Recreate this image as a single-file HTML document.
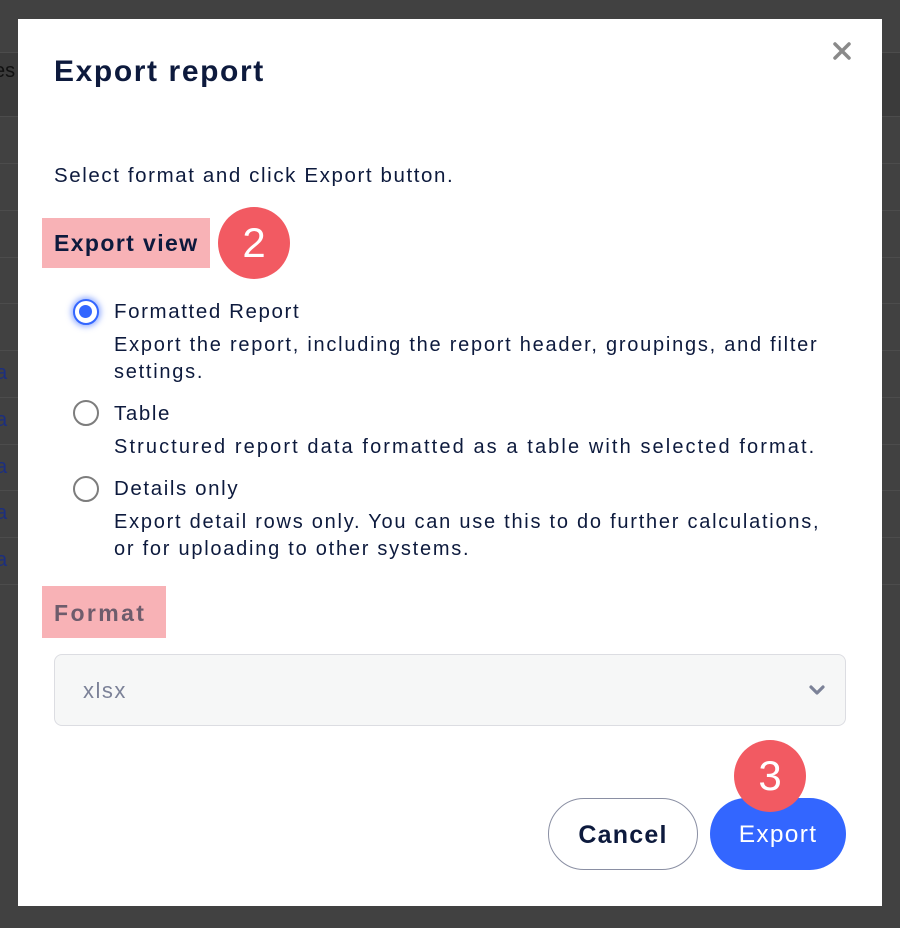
<!DOCTYPE html>
<html><head><style>
*{margin:0;padding:0;box-sizing:border-box}
body{width:900px;height:928px;background:#414141;position:relative;overflow:hidden;font-family:"Liberation Sans",sans-serif;color:#0d1a3d}
.a{position:absolute}
.line{position:absolute;left:0;width:900px;height:1px;background:#4c4c4c}
.modal{position:absolute;left:18px;top:19px;width:864px;height:887px;background:#fff}
.t{position:absolute;white-space:nowrap}
.badge{position:absolute;width:72px;height:72px;border-radius:50%;background:#f25a62;color:#fff;font-size:42px;text-align:center;line-height:72px}
.radio{position:absolute;width:26px;height:26px;border-radius:50%;border:2.5px solid #7d7d7d;background:#fff}
.desc{font-size:20px;line-height:27px;color:#0d1a3d;letter-spacing:1.75px}
.lbl{font-size:20.5px;color:#0d1a3d;letter-spacing:1.6px}
</style></head><body>
<div class="a" style="left:0;top:52px;width:900px;height:64px;background:#3b3b3b"></div>
<div class="line" style="top:52px"></div>
<div class="line" style="top:116px"></div>
<div class="line" style="top:163px"></div>
<div class="line" style="top:210px"></div>
<div class="line" style="top:257px"></div>
<div class="line" style="top:303px"></div>
<div class="line" style="top:350px"></div>
<div class="line" style="top:397px"></div>
<div class="line" style="top:444px"></div>
<div class="line" style="top:490px"></div>
<div class="line" style="top:537px"></div>
<div class="line" style="top:584px"></div>
<div class="a" style="left:866px;top:52px;width:1px;height:540px;background:#4c4c4c"></div>
<div class="t" style="left:-6px;top:60px;font-size:20px;color:#111">es</div>
<div class="t" style="left:-4px;top:362px;font-size:20px;color:#1c2f80">a</div>
<div class="t" style="left:-4px;top:409px;font-size:20px;color:#1c2f80">a</div>
<div class="t" style="left:-4px;top:456px;font-size:20px;color:#1c2f80">a</div>
<div class="t" style="left:-4px;top:502px;font-size:20px;color:#1c2f80">a</div>
<div class="t" style="left:-4px;top:549px;font-size:20px;color:#1c2f80">a</div>

<div class="modal"></div>
<div class="t" style="left:54px;top:55px;font-size:30px;font-weight:bold;color:#0d1a3d;letter-spacing:1.6px">Export report</div>
<svg class="a" style="left:833px;top:42px" width="18" height="18" viewBox="0 0 18 18"><path d="M2 2L16 16M16 2L2 16" stroke="#8a8a8a" stroke-width="3.5" stroke-linecap="round"/></svg>
<div class="t desc" style="left:54px;top:162px;font-size:20.5px;letter-spacing:1.6px">Select format and click Export button.</div>

<div class="a" style="left:42px;top:218px;width:168px;height:50px;background:#f8b2b6"></div>
<div class="t" style="left:54px;top:230px;font-size:23px;font-weight:bold;letter-spacing:1.4px">Export view</div>
<div class="badge" style="left:218px;top:207px">2</div>

<div class="radio" style="left:73px;top:299px;border:2.5px solid #3366ff;box-shadow:0 0 6px 2px rgba(51,102,255,.5)"><div class="a" style="left:4px;top:4px;width:13px;height:13px;border-radius:50%;background:#3366ff"></div></div>
<div class="t lbl" style="left:114px;top:300px">Formatted Report</div>
<div class="t desc" style="left:114px;top:332px">Export the report, including the report header, groupings, and filter<br>settings.</div>

<div class="radio" style="left:73px;top:400px"></div>
<div class="t lbl" style="left:114px;top:402px">Table</div>
<div class="t desc" style="left:114px;top:434px;letter-spacing:2.1px">Structured report data formatted as a table with selected format.</div>

<div class="radio" style="left:73px;top:476px"></div>
<div class="t lbl" style="left:114px;top:477px">Details only</div>
<div class="t desc" style="left:114px;top:509px">Export detail rows only. You can use this to do further calculations,<br>or for uploading to other systems.</div>

<div class="a" style="left:42px;top:586px;width:124px;height:52px;background:#f8b2b6"></div>
<div class="t" style="left:54px;top:600px;font-size:23px;font-weight:bold;color:#6e5c6c;letter-spacing:2.4px">Format</div>

<div class="a" style="left:54px;top:654px;width:792px;height:72px;background:#f6f7f7;border:1px solid #dcdde2;border-radius:8px"></div>
<div class="t" style="left:83px;top:678px;font-size:22px;color:#7c8298;letter-spacing:1.5px">xlsx</div>
<svg class="a" style="left:809px;top:685px" width="16" height="11" viewBox="0 0 16 11"><path d="M2 2L8 8L14 2" stroke="#7c8298" stroke-width="3.2" fill="none" stroke-linecap="round" stroke-linejoin="round"/></svg>

<div class="a" style="left:548px;top:798px;width:150px;height:72px;border:1px solid #8a8fa3;border-radius:36px;background:#fff"></div>
<div class="t" style="left:548px;top:821px;width:150px;text-align:center;font-size:25px;font-weight:bold;color:#0d1a3d;letter-spacing:1.2px">Cancel</div>
<div class="a" style="left:710px;top:798px;width:136px;height:72px;border-radius:36px;background:#3366ff"></div>
<div class="t" style="left:710px;top:821px;width:136px;text-align:center;font-size:24.5px;color:#fff;letter-spacing:1.3px">Export</div>
<div class="badge" style="left:734px;top:740px">3</div>
</body></html>
